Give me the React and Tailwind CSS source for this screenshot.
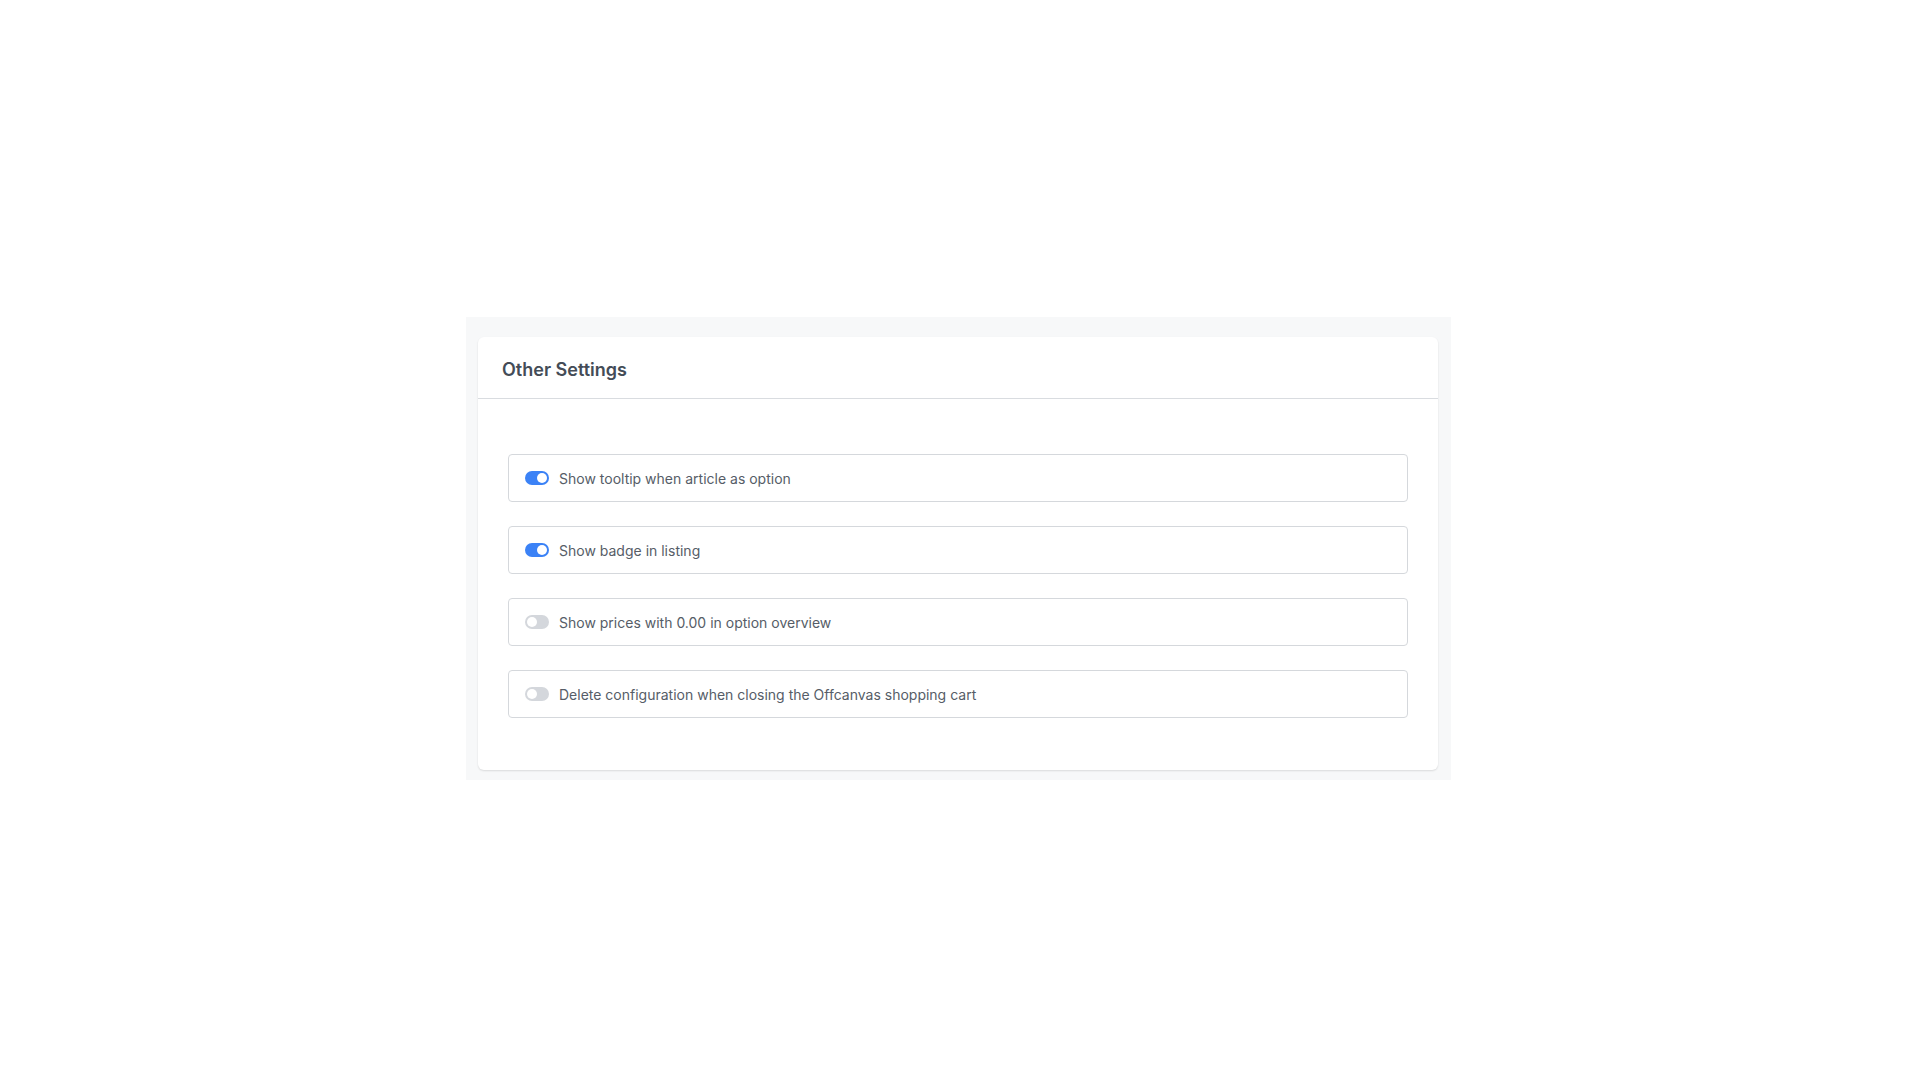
import React, { useState } from "react";

const initial = [
  { id: 1, label: "Show tooltip when article as option", on: true },
  { id: 2, label: "Show badge in listing", on: true },
  { id: 3, label: "Show prices with 0.00 in option overview", on: false },
  { id: 4, label: "Delete configuration when closing the Offcanvas shopping cart", on: false },
];

function Toggle({ on, onClick }) {
  return (
    <button
      type="button"
      onClick={onClick}
      className={
        "relative h-[14px] w-[24px] shrink-0 rounded-full transition-colors " +
        (on ? "bg-[#3b82f6]" : "bg-[#d4d7dc]")
      }
    >
      <span
        className={
          "absolute top-[2px] h-[10px] w-[10px] rounded-full bg-white " +
          (on ? "left-[12px]" : "left-[2px]")
        }
      />
    </button>
  );
}

export default function App() {
  const [settings, setSettings] = useState(initial);

  function flip(id) {
    setSettings((s) => s.map((x) => (x.id === id ? { ...x, on: !x.on } : x)));
  }

  return (
    <div
      className="min-h-screen bg-white pt-[317px] pl-[466px]"
      style={{ fontFamily: "Inter, 'Noto Sans', sans-serif" }}
    >
      <div className="w-[985px] bg-[#f7f8f9] pt-[20px] pb-[10px] pl-[12px] pr-[13px]">
        <div className="rounded-[6px] bg-white shadow-[0_1px_2px_rgba(0,0,0,0.12)]">
          <div className="flex h-[62px] items-center border-b border-[#d9dce0] px-[24px] pt-[3px]">
            <h2 className="text-[18px] font-semibold text-[#444c57]">Other Settings</h2>
          </div>
          <div className="space-y-[24px] px-[30px] pt-[55px] pb-[52px]">
            {settings.map((s) => (
              <div
                key={s.id}
                className="flex h-[48px] items-center gap-[10px] rounded-[4px] border border-[#d5d8dc] pl-[16px]"
              >
                <Toggle on={s.on} onClick={() => flip(s.id)} />
                <span className="text-[14px] text-[#565d67]">{s.label}</span>
              </div>
            ))}
          </div>
        </div>
      </div>
    </div>
  );
}
